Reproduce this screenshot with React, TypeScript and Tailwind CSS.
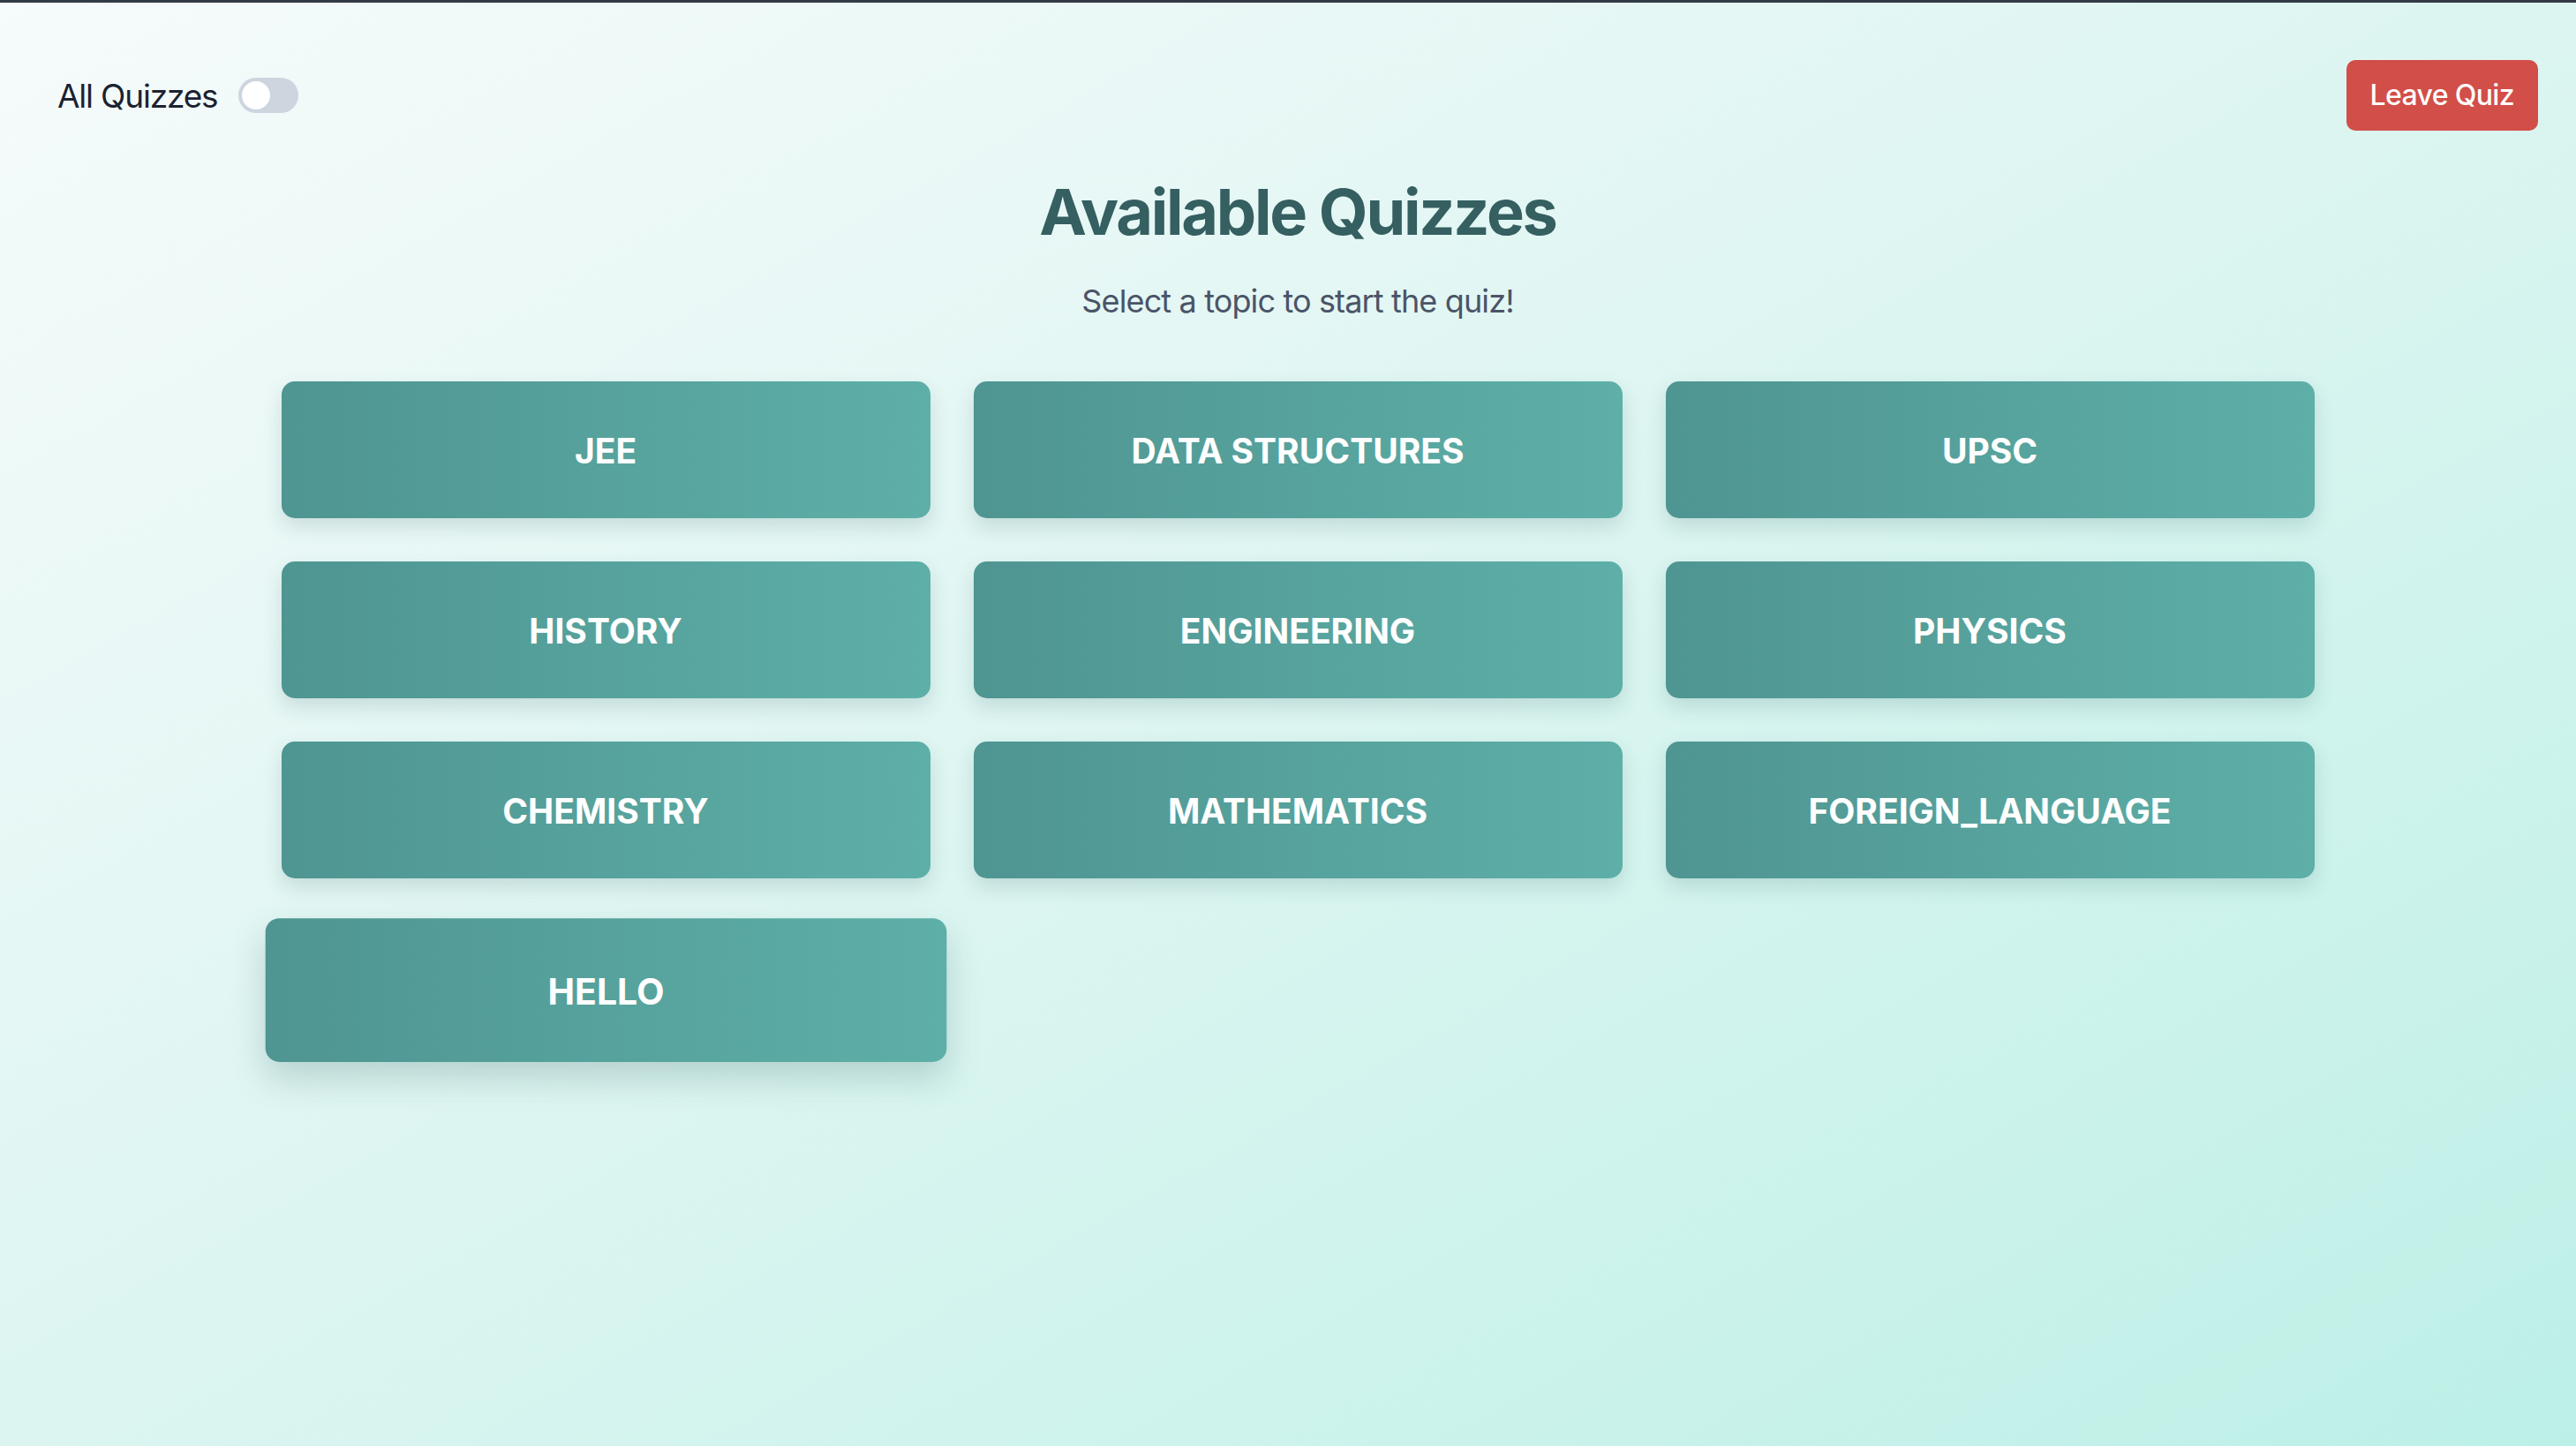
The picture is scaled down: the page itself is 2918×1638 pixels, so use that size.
import React, { useState } from 'react';

const topics = [
  'JEE',
  'DATA STRUCTURES',
  'UPSC',
  'HISTORY',
  'ENGINEERING',
  'PHYSICS',
  'CHEMISTRY',
  'MATHEMATICS',
  'FOREIGN_LANGUAGE',
  'HELLO',
];

const App: React.FC = () => {
  const [allQuizzes, setAllQuizzes] = useState(false);

  return (
    <div
      className="min-h-screen w-full bg-gradient-to-br from-[#f6fbfb] via-[#dcf5f1] to-[#bcf0e7] flex flex-col"
      style={{ fontFamily: 'Inter, "Noto Sans", sans-serif' }}
    >
      <div className="h-[3px] w-full bg-[#323a45]" />

      {/* Top bar */}
      <div className="flex items-center justify-between pt-[65px] pl-[65px] pr-[43px]">
        <div className="flex items-center gap-6">
          <span className="text-[37px] text-[#1c2230] leading-none tracking-[-0.032em]">All Quizzes</span>
          <button
            onClick={() => setAllQuizzes(!allQuizzes)}
            className="w-[68px] h-[40px] rounded-full bg-[#cdd5df] p-1 flex items-center"
          >
            <span className="w-8 h-8 rounded-full bg-white block" />
          </button>
        </div>
        <button className="h-[80px] px-[27px] rounded-[10px] bg-[#d24e48] text-white text-[32px] font-medium leading-none tracking-[-0.02em]">
          Leave Quiz
        </button>
      </div>

      {/* Heading */}
      <div className="flex flex-col items-center pl-[22px]">
        <h1 className="mt-[56px] text-[72px] leading-none font-bold text-[#355f60] tracking-[-0.031em]">Available Quizzes</h1>
        <p className="mt-[38px] text-[36px] leading-[54px] text-[#4a5468] tracking-[-0.024em]">Select a topic to start the quiz!</p>

        <div className="mt-[64px] w-[2303px] grid grid-cols-3 gap-[49px]">
          {topics.map((t) => (
            <button
              key={t}
              className={
                t === 'HELLO'
                  ? 'h-[155px] rounded-[15px] bg-gradient-to-r from-[#4f9592] to-[#5eafa8] text-white text-[39px] font-bold scale-105 shadow-[0_18px_36px_rgba(40,90,90,0.22)]'
                  : 'h-[155px] rounded-[15px] bg-gradient-to-r from-[#4f9592] to-[#5eafa8] text-white text-[39px] font-bold shadow-[0_10px_22px_rgba(40,90,90,0.16)]'
              }
            >
              <span className="relative top-[2px]">{t}</span>
            </button>
          ))}
        </div>
      </div>
    </div>
  );
};

export default App;
